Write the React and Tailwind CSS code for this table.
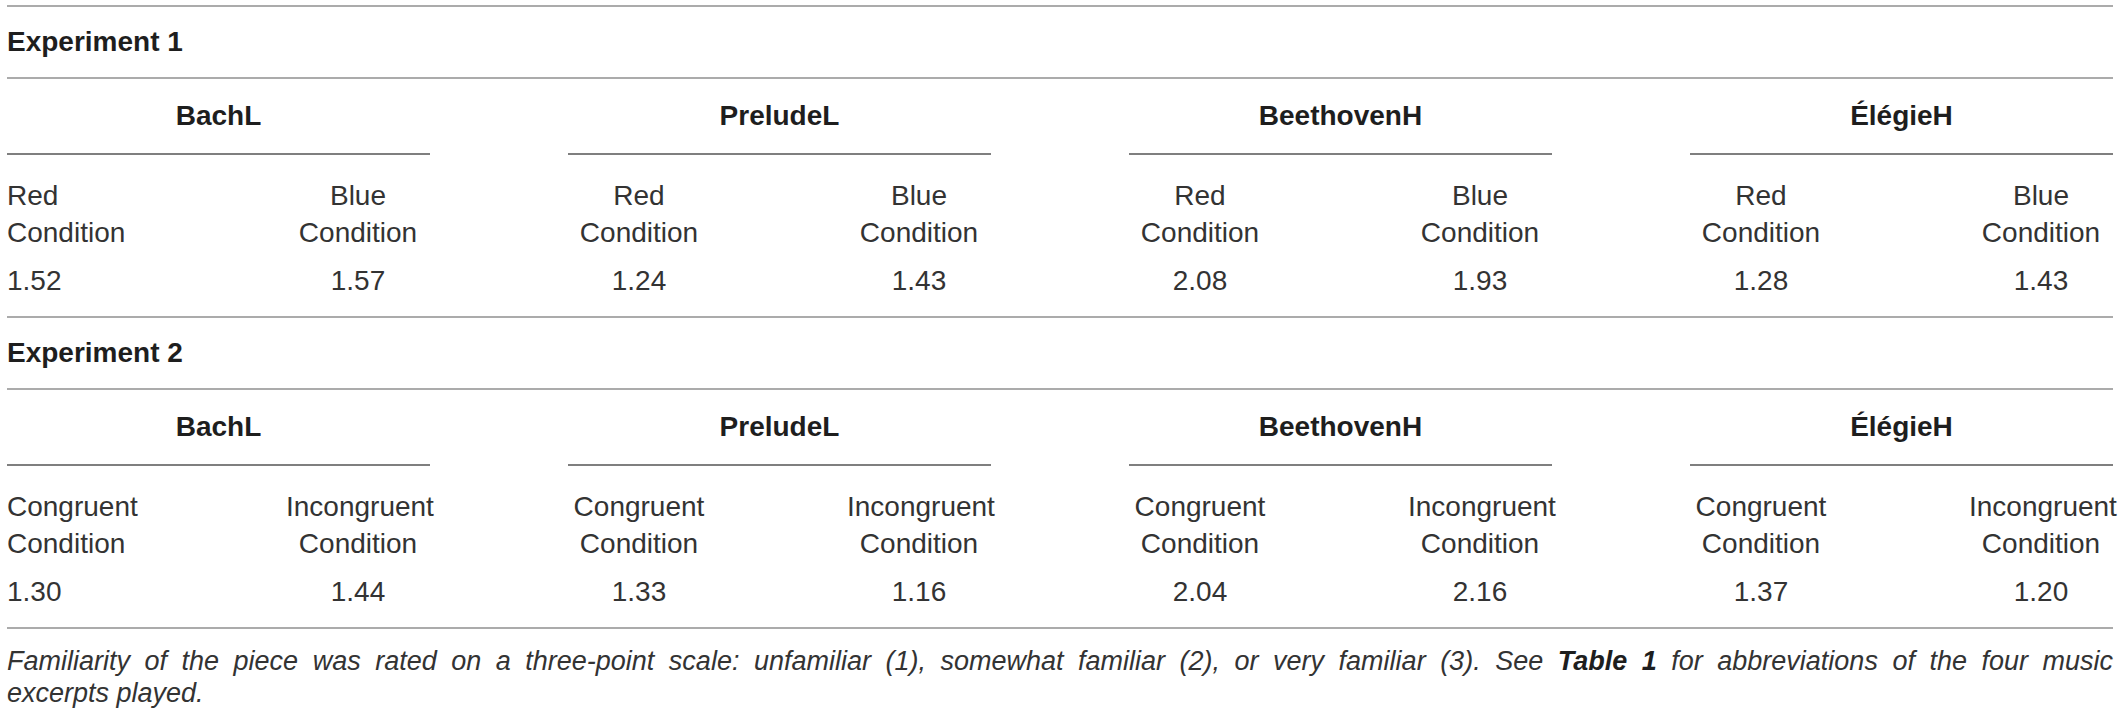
import React from 'react'

const sections = [
    {
        title: 'Experiment 1',
        groups: [
            { name: 'BachL', a: ['Red', '1.52'], b: ['Blue', '1.57'] },
            { name: 'PreludeL', a: ['Red', '1.24'], b: ['Blue', '1.43'] },
            { name: 'BeethovenH', a: ['Red', '2.08'], b: ['Blue', '1.93'] },
            { name: 'ÉlégieH', a: ['Red', '1.28'], b: ['Blue', '1.43'] },
        ],
    },
    {
        title: 'Experiment 2',
        groups: [
            { name: 'BachL', a: ['Congruent', '1.30'], b: ['Incongruent', '1.44'] },
            { name: 'PreludeL', a: ['Congruent', '1.33'], b: ['Incongruent', '1.16'] },
            { name: 'BeethovenH', a: ['Congruent', '2.04'], b: ['Incongruent', '2.16'] },
            { name: 'ÉlégieH', a: ['Congruent', '1.37'], b: ['Incongruent', '1.20'] },
        ],
    },
]

function Cell({ label, value, width, align }) {
    return (
        <div className={`${width} ${align} shrink-0 whitespace-nowrap pt-[22px] pb-[17px]`}>
            <div className="leading-[37px]">{label}</div>
            <div className="leading-[37px]">Condition</div>
            <div className="mt-[12px] leading-[36px]">{value}</div>
        </div>
    )
}

function Section({ section }) {
    return (
        <div>
            <div className="h-[70px] flex items-center font-bold text-[#1e1e1e]">{section.title}</div>
            <div className="border-t-2 border-[#ababab]" />
            <div className="flex gap-[138px]">
                {section.groups.map((g, i) => (
                    <div key={g.name} className="w-[423px] shrink-0">
                        <div className="h-[74px] flex items-center justify-center font-bold text-[#1e1e1e]">
                            {g.name}
                        </div>
                        <div className="border-t-2 border-[#7f7f7f]" />
                        <div className="flex justify-between text-[#333333]">
                            <Cell label={g.a[0]} value={g.a[1]} width="w-[142px]" align={i === 0 ? 'text-left' : 'text-center'} />
                            <Cell label={g.b[0]} value={g.b[1]} width="w-[144px]" align="text-center" />
                        </div>
                    </div>
                ))}
            </div>
            <div className="border-t-2 border-[#ababab]" />
        </div>
    )
}

export default function App() {
    return (
        <div className="w-[2119px] h-[713px] bg-white pt-[5px] pl-[7px] pr-[6px] text-[28px] font-['Liberation_Sans',Arial,sans-serif]">
            <div className="border-t-2 border-[#ababab]" />
            {sections.map((s) => (
                <Section key={s.title} section={s} />
            ))}

            {/* table footnote */}
            <div className="pt-[16px] text-[27px] italic text-[#333333] leading-[32px]">
                <div className="text-justify [text-align-last:justify]">
                    Familiarity of the piece was rated on a three-point scale: unfamiliar (1), somewhat familiar (2), or very familiar (3). See <b className="text-[#1e1e1e]">Table 1</b> for abbreviations of the four music
                </div>
                <div>excerpts played.</div>
            </div>
        </div>
    )
}
